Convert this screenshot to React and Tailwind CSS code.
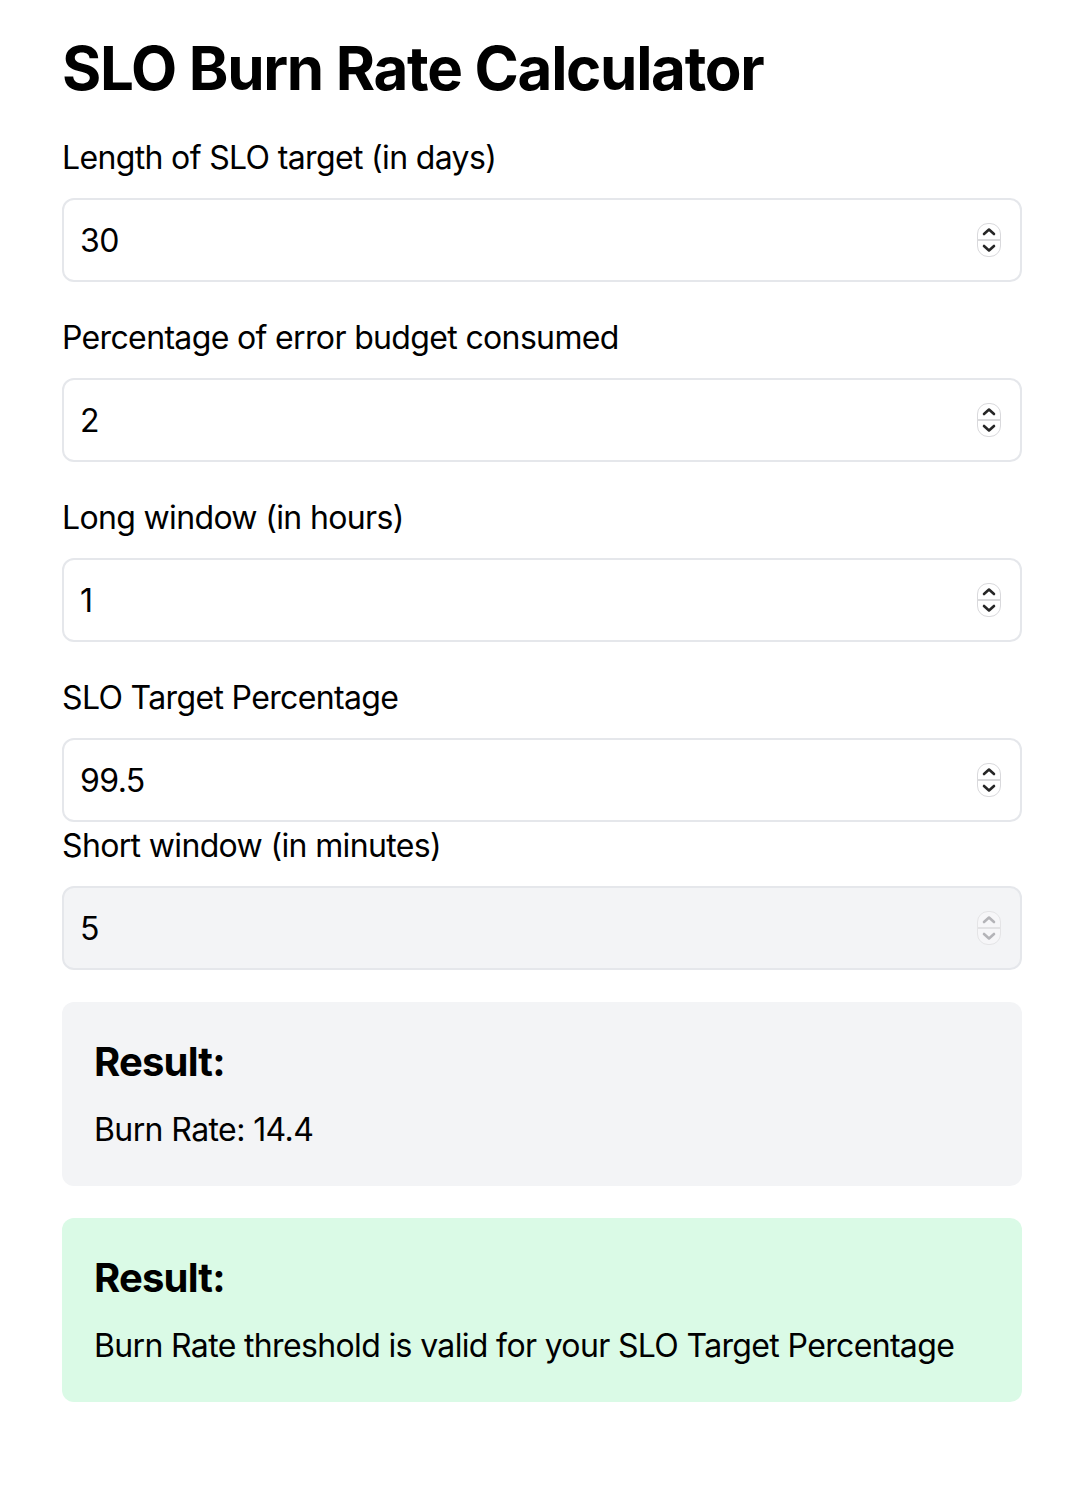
import React, { useState } from 'react';

const Spinner = ({ disabled }) => {
    const stroke = disabled ? '#b4b4b8' : '#262626';
    return (
        <div className={`absolute right-[21px] top-1/2 -translate-y-1/2 w-[24px] h-[34px] rounded-[11px] border flex flex-col overflow-hidden ${disabled ? 'border-[#e4e4e6] bg-[#f6f6f8]' : 'border-[#d9d9dc] bg-white'}`}>
            <div className="flex-1 flex items-center justify-center">
                <svg width="14" height="9" viewBox="0 0 14 9" fill="none">
                    <path d="M2 7 L7 2.5 L12 7" stroke={stroke} strokeWidth="2.6" strokeLinecap="round" strokeLinejoin="round" />
                </svg>
            </div>
            <div className={`h-[2px] ${disabled ? 'bg-[#e2e2e4]' : 'bg-[#dadadc]'}`} />
            <div className="flex-1 flex items-center justify-center">
                <svg width="14" height="9" viewBox="0 0 14 9" fill="none">
                    <path d="M2 2 L7 6.5 L12 2" stroke={stroke} strokeWidth="2.6" strokeLinecap="round" strokeLinejoin="round" />
                </svg>
            </div>
        </div>
    );
};

const Field = ({ label, value, onChange, disabled, gap = 'mb-[32px]' }) => (
    <div className={gap}>
        <label className="block text-[32px] leading-[48px] tracking-[-0.65px] mb-[16px]">{label}</label>
        <div className="relative">
            <input
                type="text"
                value={value}
                disabled={disabled}
                onChange={(e) => onChange && onChange(e.target.value)}
                className={`w-full h-[84px] px-[16px] text-[32px] tracking-[-0.6px] text-black border-2 border-[#e5e7eb] rounded-[12px] outline-none ${disabled ? 'bg-[#f3f4f6]' : 'bg-white'}`}
            />
            <Spinner disabled={disabled} />
        </div>
    </div>
);

export default function App() {
    const [days, setDays] = useState('30');
    const [budget, setBudget] = useState('2');
    const [longWindow, setLongWindow] = useState('1');
    const [target, setTarget] = useState('99.5');

    // burn rate = budget% * days*24 / long window hours
    const burnRate = (parseFloat(budget) / 100) * (parseFloat(days) * 24) / parseFloat(longWindow);
    const shortWindow = Math.round(parseFloat(longWindow) * 60 / 12);

    return (
        <div className="min-h-screen bg-white text-black font-['Inter','Liberation_Sans',sans-serif]">
            <div className="w-[960px] ml-[62px] pt-[32px] pb-[64px]">
                <h1 className="text-[60px] leading-[72px] font-bold mb-[30px] tracking-[-1.3px]">SLO Burn Rate Calculator</h1>

                <Field label="Length of SLO target (in days)" value={days} onChange={setDays} />
                <Field label="Percentage of error budget consumed" value={budget} onChange={setBudget} />
                <Field label="Long window (in hours)" value={longWindow} onChange={setLongWindow} />
                <Field label="SLO Target Percentage" value={target} onChange={setTarget} gap="mb-0" />
                <Field label="Short window (in minutes)" value={shortWindow} disabled />

                <div className="bg-[#f3f4f6] rounded-[12px] p-[32px] mb-[32px]">
                    <h2 className="text-[40px] leading-[56px] font-bold tracking-[-0.8px] mb-[16px]">Result:</h2>
                    <p className="text-[32px] leading-[48px] tracking-[-0.6px]">Burn Rate: {Number(burnRate.toFixed(2))}</p>
                </div>

                <div className="bg-[#dafae6] rounded-[12px] p-[32px]">
                    <h2 className="text-[40px] leading-[56px] font-bold tracking-[-0.8px] mb-[16px]">Result:</h2>
                    <p className="text-[32px] leading-[48px] tracking-[-0.65px]">Burn Rate threshold is valid for your SLO Target Percentage</p>
                </div>
            </div>
        </div>
    );
}
